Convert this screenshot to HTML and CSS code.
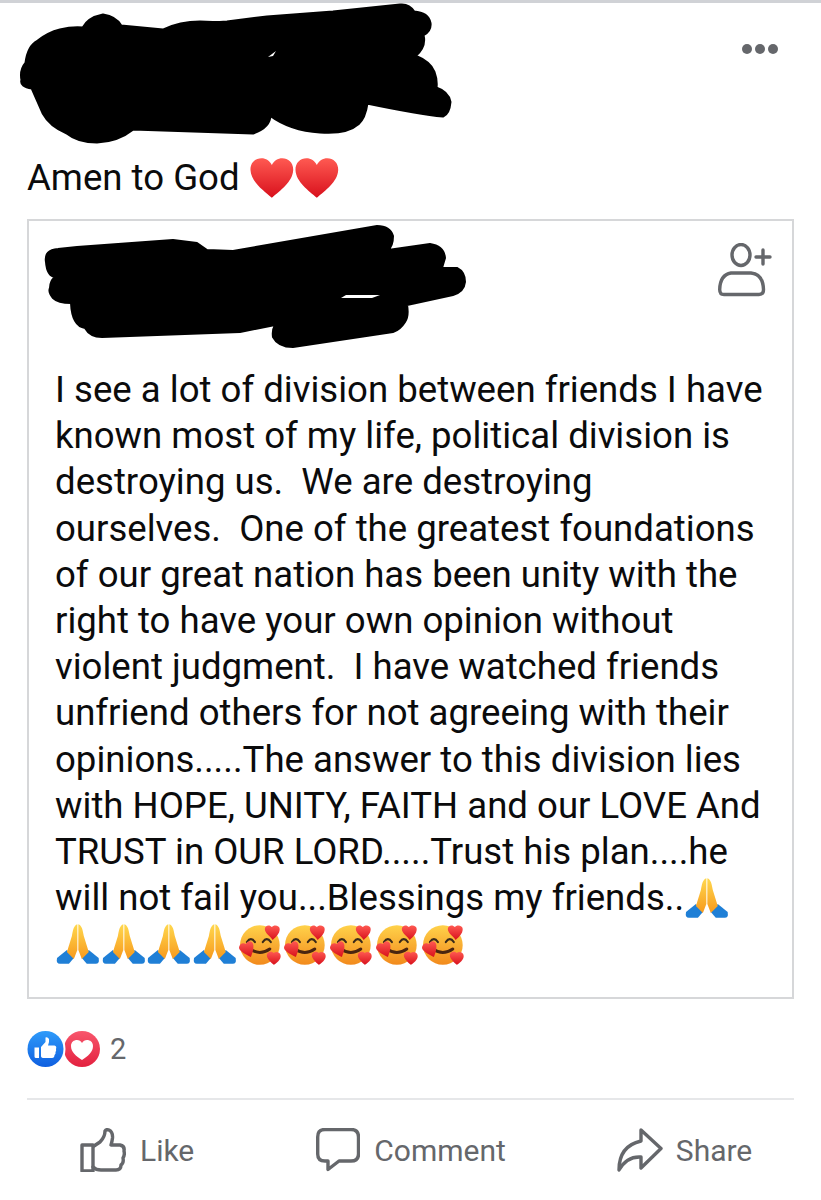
FILE: index.html
```html
<!DOCTYPE html>
<html lang="en">
<head>
<meta charset="utf-8">
<title>Post</title>
<link rel="stylesheet" href="styles.css">
</head>
<body>
<svg class="defs" width="0" height="0" aria-hidden="true">
  <defs>
    <linearGradient id="hg" x1="0" y1="0" x2="0" y2="1"><stop offset="0" stop-color="#ff5a52"/><stop offset="1" stop-color="#d8101c"/></linearGradient>
    <linearGradient id="yg" x1="0" y1="0" x2="0" y2="1"><stop offset="0" stop-color="#ffd84e"/><stop offset="1" stop-color="#f79a1e"/></linearGradient>
    <linearGradient id="bg" x1="0" y1="0" x2="0" y2="1"><stop offset="0" stop-color="#2e9bfa"/><stop offset="1" stop-color="#0f5fe0"/></linearGradient>
    <linearGradient id="rg" x1="0" y1="0" x2="0" y2="1"><stop offset="0" stop-color="#f8566c"/><stop offset="1" stop-color="#e3213f"/></linearGradient>
    <linearGradient id="sg" x1="0" y1="0" x2="0" y2="1"><stop offset="0" stop-color="#ffd24a"/><stop offset="1" stop-color="#f28a1c"/></linearGradient>
    <symbol id="heart" viewBox="0 0 46 42"><path fill="url(#hg)" d="M23 41C15 34 2 25 1.500 13 1.200 5.500 6.500 1 12.500 1 17 1 21 3.500 23 8 25 3.500 29 1 33.500 1 39.500 1 44.800 5.500 44.500 13 44 25 31 34 23 41Z"/></symbol>
    <symbol id="pray" viewBox="0 0 46 42">
      <path fill="#1f7fd6" d="M2 35 12 27 19 35 14 41H5Q1 41 2 35Z"/>
      <path fill="#1f7fd6" d="M44 35 34 27 27 35 32 41H41Q45 41 44 35Z"/>
      <path fill="url(#yg)" d="M22.500 1C19 2 18 7 17 13L12 29 19 36 22.500 27Z"/>
      <path fill="url(#yg)" d="M23.500 1C27 2 28 7 29 13L34 29 27 36 23.500 27Z"/>
    </symbol>
    <symbol id="love" viewBox="0 0 46 42">
      <circle cx="22" cy="22" r="20" fill="url(#sg)"/>
      <path fill="none" stroke="#3a2a1a" stroke-width="2.200" stroke-linecap="round" d="M9 19Q13 13 17 19M25 19Q29 13 33 19"/>
      <path fill="none" stroke="#4a2510" stroke-width="3" stroke-linecap="round" d="M12 26Q22 33 32 26"/>
      <path fill="url(#hg)" d="M35 17C32 13 27 10 27 6 27 2 32 1 34 4 36 1 42 2 42 6 42 11 38 14 35 17Z"/>
      <path fill="url(#hg)" d="M13 34C9 32 2 29 1 25 1 21 5 19 8 21 9 17 15 17 15.500 22 16 27 14 31 13 34Z"/>
      <path fill="url(#hg)" d="M36 42C33 39 29 36 29 32 30 28 34 28 36 30 38 28 43 29 43 33 43 37 39 40 36 42Z"/>
    </symbol>
  </defs>
</svg>

<div class="topbar"></div>
<main class="post">
  <header class="post-head">
    <svg class="scribble-a" viewBox="0 0 440 142" width="440" height="142" aria-hidden="true">
      <g transform="translate(-15 -3)">
        <path fill="#d2416e" d="M30 86 43 112 38 90Z"/>
        <path fill="#000" stroke="#000" stroke-width="3" stroke-linejoin="round" d="M22 80Q20 70 26 63 28 46 38 41 48 33 60 30 72 27 83 28 88 18 103 15 116 17 121 26L163 30Q180 22 200 22 212 23 227 22L267 17 333 12 400 5Q409 4 414 12 428 13 430 23 431 31 423 35 426 47 415 56 430 62 434 72 437 80 436 88 448 92 450 102 449 114 443 116 420 114 367 103 365 118 358 124 347 134 320 132 290 130 270 115 270 127 253 133L133 129Q118 141 97 142 78 142 67 133 50 126 43 113L32 88Q20 86 22 80Z"/>
        <path fill="#fff" d="M268 57 276 51 273 56Z"/>
      </g>
    </svg>
    <button class="more" type="button" aria-label="More"><span></span><span></span><span></span></button>
  </header>

  <p class="caption">Amen to God <svg class="em hearts"><use href="#heart"/></svg><svg class="em hearts"><use href="#heart"/></svg></p>

  <article class="card">
    <div class="card-head">
      <svg class="scribble-b" viewBox="0 0 424 126" width="424" height="126" aria-hidden="true">
        <g transform="translate(-44 -225)">
          <path fill="#000" stroke="#000" stroke-width="2" stroke-linejoin="round" d="M46 262Q44 250 58 249L77 247 173 240 197 243 207 250 233 251 377 226Q390 226 393 236 393 246 388 250L430 244Q444 246 445 258L442 268 457 268Q465 272 465 282 464 292 453 295L407 305Q409 316 405 322 400 330 393 332L293 347Q278 347 273 337 272 330 275 325L240 332 102 337Q90 337 85 328 72 326 71 303 58 303 53 298 48 292 50 288 50 281 55 277 47 276 46 262Z"/>
          <path fill="#fff" d="M341 298 346 295 380 295 372 298Z"/>
        </g>
      </svg>
      <svg class="add-friend" viewBox="0 0 54 54" width="54" height="54" aria-hidden="true">
        <g fill="none" stroke="#65676b" stroke-width="3.400" stroke-linecap="round" stroke-linejoin="round">
          <ellipse cx="23" cy="12" rx="9" ry="10.500"/>
          <path d="M13 30H33Q45 31 45.500 46.500 45.500 51.500 41 51.500H6Q1.700 51.500 1.700 46.500 2 32 13 30Z"/>
          <path d="M38 14H52M45 7V21"/>
        </g>
      </svg>
    </div>
    <p class="body-text">I see a lot of division between friends I have<br>known most of my life, political division is<br>destroying us.&nbsp; We are destroying<br>ourselves.&nbsp; One of the greatest foundations<br>of our great nation has been unity with the<br>right to have your own opinion without<br>violent judgment.&nbsp; I have watched friends<br>unfriend others for not agreeing with their<br>opinions.....The answer to this division lies<br>with HOPE, UNITY, FAITH and our LOVE And<br>TRUST in OUR LORD.....Trust his plan....he<br>will not fail you...Blessings my friends..<svg class="em"><use href="#pray"/></svg><br><svg class="em"><use href="#pray"/></svg><svg class="em"><use href="#pray"/></svg><svg class="em"><use href="#pray"/></svg><svg class="em"><use href="#pray"/></svg><svg class="em"><use href="#love"/></svg><svg class="em"><use href="#love"/></svg><svg class="em"><use href="#love"/></svg><svg class="em"><use href="#love"/></svg><svg class="em"><use href="#love"/></svg></p>
  </article>

  <div class="reactions">
    <svg class="react-icons" viewBox="0 0 74 38" width="74" height="38" aria-hidden="true">
      <circle cx="55" cy="19" r="18" fill="url(#rg)"/>
      <path fill="#fff" d="M55 30C49 26 44 22 44 16 44 12 47 10 50 10 52 10 54 11 55 13 56 11 58 10 60 10 63 10 66 12 66 16 66 22 61 26 55 30Z"/>
      <circle cx="18.500" cy="19" r="20" fill="#fff"/>
      <circle cx="18.500" cy="19" r="18" fill="url(#bg)"/>
      <path fill="#fff" d="M7.500 17.500H12V28H9Q7.500 28 7.500 26.500ZM14 17 18.500 12V7.500Q20.500 6.500 22 9 22.500 12 21 15.500H27.500Q30 16 29 19 29.500 21 28.500 22 29 24 27.500 25 27.500 28 25 28H17Q14 28 14 26Z"/>
    </svg>
    <span class="count">2</span>
  </div>

  <nav class="actions">
    <a class="action like">
      <svg viewBox="0 0 46 44" width="46" height="44" aria-hidden="true"><g fill="none" stroke="#65676b" stroke-width="3.400" stroke-linejoin="round" stroke-linecap="round"><path d="M2 17H13V43H2Z"/><path d="M14 18 20 14Q25 9 25 3 26 1 29 2 33 4 32.500 10 32 14 31 17H40Q45 18 44 23 45 27 43 30 44 35 41 37 41 42 36 42H21Q16 42 13 39"/></g></svg>
      <span>Like</span>
    </a>
    <a class="action comment">
      <svg viewBox="0 0 44 44" width="44" height="44" aria-hidden="true"><path fill="none" stroke="#65676b" stroke-width="3.400" stroke-linejoin="round" d="M9 1.500H35Q42.500 1.500 42.500 9V26Q42.500 33 35 33H23L12 41.500V33H9Q1.700 33 1.700 26V9Q1.700 1.500 9 1.500Z"/></svg>
      <span>Comment</span>
    </a>
    <a class="action share">
      <svg viewBox="0 0 46 44" width="46" height="44" aria-hidden="true"><path fill="none" stroke="#65676b" stroke-width="3.400" stroke-linejoin="round" stroke-linecap="round" d="M24 2 44 20.500 24 40V29Q10 28 2 42 2 18 24 13Z"/></svg>
      <span>Share</span>
    </a>
  </nav>
</main>
</body>
</html>
```
FILE: styles.css
```css
* { box-sizing: border-box; }
html, body { margin: 0; padding: 0; background: #fff; }
body { width: 821px; height: 1200px; overflow: hidden; font-family: Roboto, "Liberation Sans", sans-serif; color: #0b0b0c; }
.defs { position: absolute; }
.topbar { height: 3px; background: #d0d2d6; }
.post { padding: 0 27px; }

.post-head { display: flex; justify-content: space-between; height: 145px; }
.scribble-a { display: block; margin-left: -12px; flex: none; }
.more { display: flex; gap: 3px; align-self: flex-start; margin: 41px 16px 0 0; padding: 0; border: 0; background: none; }
.more span { width: 10px; height: 10px; border-radius: 50%; background: #65676b; }

.caption { margin: 7px 0 0; height: 64px; font-size: 36.600px; line-height: 46px; white-space: nowrap; }
.em { display: inline-block; width: 45.700px; height: 42px; vertical-align: -9px; margin-top: -10px; }
.hearts { margin-right: 0; }

.card { height: 780px; border: 2px solid #d6d7d9; }
.card-head { display: flex; justify-content: space-between; align-items: flex-start; height: 146px; padding: 4px 20px 0 15px; }
.scribble-b { display: block; flex: none; }
.add-friend { display: block; margin-top: 18px; }
.body-text { margin: 0; padding: 0 0 0 26px; font-size: 36.600px; line-height: 46.200px; white-space: nowrap; }

.reactions { display: flex; align-items: center; gap: 9px; height: 101px; border-bottom: 2px solid #e6e7e9; }
.react-icons { display: block; }
.count { font-size: 29px; color: #65676b; }

.actions { display: flex; height: 94px; padding-top: 27px; }
.action { display: flex; align-items: center; gap: 14px; height: 46px; font-size: 30px; color: #65676b; }
.action svg { display: block; flex: none; }
.like { margin-left: 53px; }
.comment { margin-left: 122px; }
.share { margin-left: 111px; gap: 13px; }
```
